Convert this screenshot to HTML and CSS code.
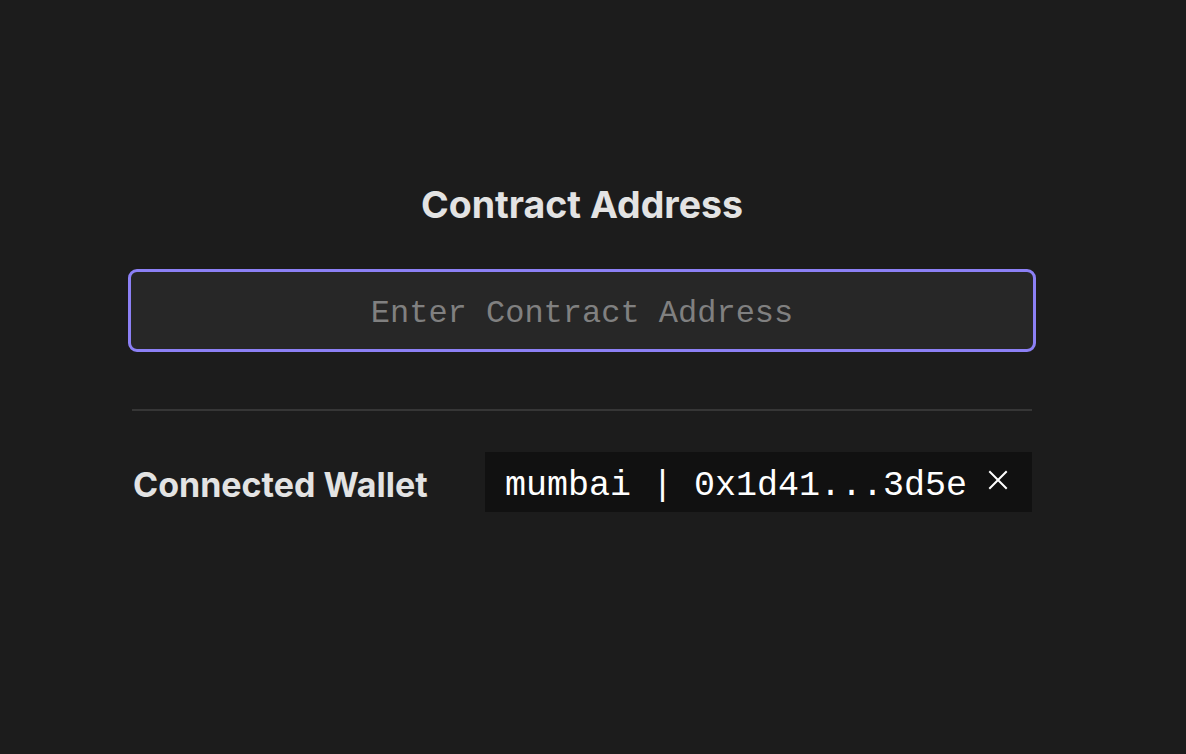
FILE: index.html
```html
<!DOCTYPE html>
<html lang="en">
<head>
<meta charset="utf-8">
<title>Contract Address</title>
<link rel="stylesheet" href="styles.css">
</head>
<body>
<main class="panel">
  <h1 class="title">Contract Address</h1>
  <input class="address-input" type="text" placeholder="Enter Contract Address">
  <hr class="divider">
  <div class="wallet-row">
    <span class="wallet-label">Connected Wallet</span>
    <div class="wallet-chip">
      <span class="wallet-text">mumbai | 0x1d41...3d5e</span>
      <svg class="close-icon" viewBox="0 0 20 20" width="20" height="20" aria-hidden="true">
        <path d="M2 2 L18 18 M18 2 L2 18" stroke="#ffffff" stroke-width="2" fill="none" stroke-linecap="square"/>
      </svg>
    </div>
  </div>
</main>
</body>
</html>
```
FILE: styles.css
```css
html, body {
  margin: 0;
  padding: 0;
  background: #1c1c1c;
  height: 100%;
}
body {
  font-family: Inter, "Liberation Sans", sans-serif;
  color: #e3e3e3;
}
.panel {
  width: 900px;
  margin-left: 132px;
  padding-top: 181px;
  display: flex;
  flex-direction: column;
}
.title {
  margin: 0;
  text-align: center;
  font-size: 37.5px;
  font-weight: 700;
  line-height: 48px;
  color: #e3e3e3;
}
.address-input {
  margin: 40px -4px 0;
  height: 83px;
  box-sizing: border-box;
  background: #272727;
  border: 3px solid #8c80f5;
  border-radius: 9px;
  outline: none;
  font-family: "Liberation Mono", monospace;
  font-size: 32px;
  color: #e3e3e3;
  text-align: center;
  padding-top: 6px;
}
.address-input::placeholder {
  color: #808080;
}
.divider {
  margin: 57px 0 0;
  border: 0;
  height: 2px;
  background: #363636;
}
.wallet-row {
  margin-top: 41px;
  display: flex;
  align-items: center;
  justify-content: space-between;
}
.wallet-label {
  font-size: 34px;
  font-weight: 700;
  color: #e3e3e3;
  padding-left: 1px;
  padding-top: 4px;
}
.wallet-chip {
  width: 547px;
  height: 60px;
  box-sizing: border-box;
  background: #111111;
  display: flex;
  align-items: center;
  padding-left: 20px;
  gap: 21px;
}
.wallet-text {
  font-family: "Liberation Mono", monospace;
  font-size: 35px;
  color: #ffffff;
  white-space: pre;
  padding-top: 8px;
}
.close-icon {
  margin-top: -4px;
}
```
